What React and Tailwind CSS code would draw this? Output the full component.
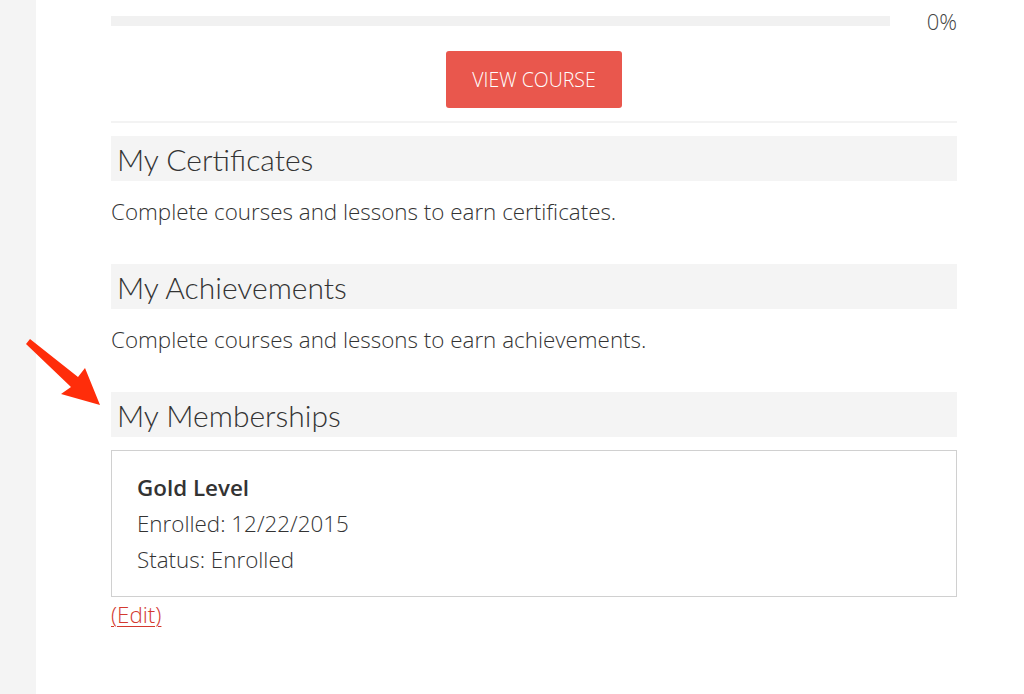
export default function App() {
  return (
    <div className="relative flex w-[1024px] h-[694px] bg-white overflow-hidden" style={{ fontFamily: '"Open Sans", sans-serif' }}>
      <div className="w-[36px] h-full bg-[#f4f4f4] shrink-0" />
      <div className="pl-[75px] w-[921px] pt-[11px]">
        <div className="flex items-center h-[20px]">
          <div className="w-[779px] h-[10px] bg-[#f1f1f1]" />
          <div className="flex-1 text-right text-[22px] leading-[20px] text-[#444] font-light">0%</div>
        </div>
        <div className="flex justify-center mt-[20px]">
          <button className="w-[176px] h-[57px] rounded-[3px] bg-[#e9574d] text-white text-[19.5px] font-light">VIEW COURSE</button>
        </div>
        <div className="mt-[13px] h-[2px] bg-[#f3f3f3]" />
        <Heading title="My Certificates" className="mt-[13px]" />
        <p className="mt-[17px] text-[22.4px] leading-[28px] text-[#333] font-light">Complete courses and lessons to earn certificates.</p>
        <Heading title="My Achievements" className="mt-[38px]" />
        <p className="mt-[17px] text-[22.4px] leading-[28px] text-[#333] font-light">Complete courses and lessons to earn achievements.</p>
        <Heading title="My Memberships" className="mt-[38px]" />
        <div className="mt-[13px] h-[147px] border border-[#d0d0d0] pl-[25px] pt-[19px] text-[22.4px] leading-[36px] text-[#333] font-light">
          <div className="font-semibold text-[#333]">Gold Level</div>
          <div>Enrolled: 12/22/2015</div>
          <div>Status: Enrolled</div>
        </div>
        <a href="#" className="block mt-[4px] text-[22.4px] leading-[28px] text-[#d3392f] underline underline-offset-[3px] decoration-1 font-light">(Edit)</a>
      </div>
      <svg className="absolute left-0 top-0 pointer-events-none" width="140" height="440" viewBox="0 0 140 440">
        <polygon points="26,344 30,339 78,377 85,368 100,405 61,394 71,387" fill="#ff2d0a" />
      </svg>
    </div>
  );
}

function Heading({ title, className }) {
  return (
    <div className={"h-[45px] bg-[#f4f4f4] flex items-center pl-[6px] " + className}>
      <span className="text-[30px] leading-[32px] text-[#333] font-light" style={{ fontFamily: 'Lato, sans-serif' }}>{title}</span>
    </div>
  );
}
